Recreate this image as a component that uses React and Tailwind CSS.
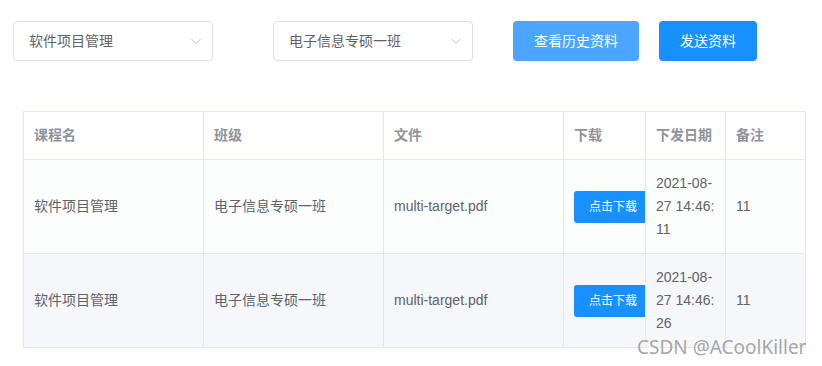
import React from 'react';

const rows = [
  { course: '软件项目管理', cls: '电子信息专硕一班', file: 'multi-target.pdf', date: '2021-08-27 14:46:11', note: '11', bg: 'bg-[#fcfefe]' },
  { course: '软件项目管理', cls: '电子信息专硕一班', file: 'multi-target.pdf', date: '2021-08-27 14:46:26', note: '11', bg: 'bg-[#f5f7fa]' },
];

function Select({ value }) {
  return (
    <div className="w-[200px] h-10 flex items-center justify-between pl-[15px] pr-[10px] border border-[#dcdfe6] rounded bg-white">
      <span className="text-sm text-[#606266]">{value}</span>
      <svg width="12" height="12" viewBox="0 0 12 12" fill="none" stroke="#c0c4cc" strokeWidth="1">
        <path d="M1.5 4l4.5 4.5L10.5 4" />
      </svg>
    </div>
  );
}

export default function App() {
  return (
    <div className="w-[822px] h-[366px] bg-white relative overflow-hidden font-['Liberation_Sans','Noto_Sans_CJK_SC',sans-serif]">
      {/* toolbar */}
      <div className="flex items-center pt-[21px] pl-[13px]">
        <Select value="软件项目管理" />
        <div className="ml-[60px]">
          <Select value="电子信息专硕一班" />
        </div>
        <button className="ml-[40px] w-[126px] h-10 rounded bg-[#4ca6ff] text-white text-sm">查看历史资料</button>
        <button className="ml-[20px] w-[98px] h-10 rounded bg-[#1890ff] text-white text-sm">发送资料</button>
      </div>

      {/* table */}
      <table className="mt-[50px] ml-[23px] table-fixed border-separate border-spacing-0 border-l border-t border-[#e4e8ee] w-[783px]">
        <colgroup>
          <col className="w-[180px]" />
          <col className="w-[180px]" />
          <col className="w-[180px]" />
          <col className="w-[82px]" />
          <col className="w-[80px]" />
          <col className="w-[80px]" />
        </colgroup>
        <thead>
          <tr className="bg-white">
            {['课程名', '班级', '文件', '下载', '下发日期', '备注'].map((h) => (
              <th key={h} className="text-left font-bold text-sm text-[#909399] py-3 px-[10px] leading-[23px] border-r border-b border-[#e4e8ee]">
                {h}
              </th>
            ))}
          </tr>
        </thead>
        <tbody>
          {rows.map((r, i) => (
            <tr key={i} className={r.bg}>
              <td className="text-sm text-[#606266] py-3 px-[10px] leading-[23px] border-r border-b border-[#e4e8ee] align-middle">{r.course}</td>
              <td className="text-sm text-[#606266] py-3 px-[10px] leading-[23px] border-r border-b border-[#e4e8ee] align-middle">{r.cls}</td>
              <td className="text-sm text-[#606266] py-3 px-[10px] leading-[23px] border-r border-b border-[#e4e8ee] align-middle">{r.file}</td>
              <td className="py-3 border-r border-b border-[#e4e8ee] align-middle">
                <div className="px-[10px] overflow-hidden">
                  <button className="h-8 px-[15px] whitespace-nowrap rounded-[3px] bg-[#1890ff] text-white text-xs">点击下载</button>
                </div>
              </td>
              <td className="text-sm text-[#606266] py-3 px-[10px] leading-[23px] border-r border-b border-[#e4e8ee] align-middle break-all">{r.date}</td>
              <td className="text-sm text-[#606266] py-3 px-[10px] leading-[23px] border-r border-b border-[#e4e8ee] align-middle">{r.note}</td>
            </tr>
          ))}
        </tbody>
      </table>

      {/* watermark */}
      <div className="absolute left-[637px] top-[333px] text-[19px] text-[#a6a6a6] [text-shadow:0_0_2px_#fff] font-['Noto_Sans',sans-serif]">
        CSDN @ACoolKiller
      </div>
    </div>
  );
}
